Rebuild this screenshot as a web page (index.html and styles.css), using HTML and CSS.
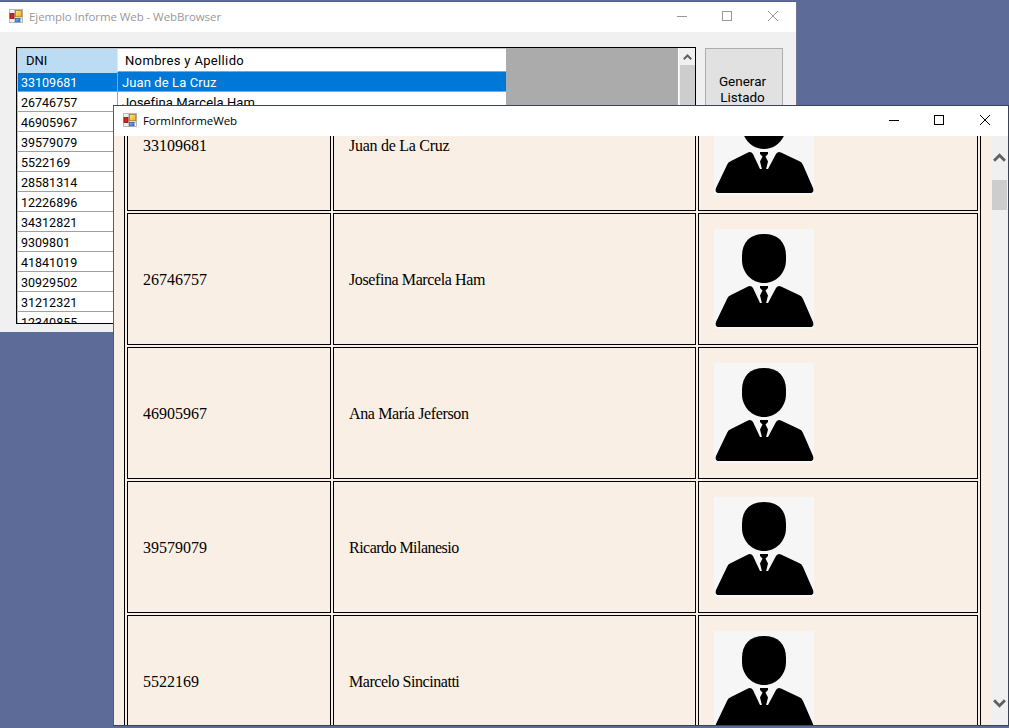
FILE: index.html
```html
<!DOCTYPE html>
<html lang="es">
<head>
<meta charset="utf-8">
<title>Ejemplo Informe Web</title>
<link rel="stylesheet" href="styles.css">
</head>
<body>
<svg width="0" height="0" class="defs">
  <defs>
    <linearGradient id="gy" x2="1" y2="1"><stop stop-color="#ffe68a"/><stop offset="1" stop-color="#e8ab10"/></linearGradient>
    <linearGradient id="gb" x2="1" y2="1"><stop stop-color="#8fc0ff"/><stop offset="1" stop-color="#2a62cc"/></linearGradient>
  </defs>
  <symbol id="app" viewBox="0 0 14 14">
    <rect x=".5" y=".5" width="13" height="13" fill="#f1f1f1" stroke="#b9b9b9"/>
    <path d="M5.5 1v12M1 9.5h12" stroke="#c9c9c9"/>
    <rect x="1" y="4.5" width="4" height="5" fill="#d5281c" stroke="#8d1109" stroke-width=".8"/>
    <rect x="6.4" y="1.4" width="6.4" height="6.4" fill="url(#gy)" stroke="#a9790b" stroke-width=".8"/>
    <rect x="6.4" y="9.4" width="4.6" height="3.4" fill="url(#gb)" stroke="#3563b5" stroke-width=".8"/>
  </symbol>
  <symbol id="min" viewBox="0 0 12 12"><path d="M1 6.5h10" stroke="currentColor"/></symbol>
  <symbol id="max" viewBox="0 0 12 12"><rect x="1.5" y="1.5" width="9" height="9" fill="none" stroke="currentColor"/></symbol>
  <symbol id="close" viewBox="0 0 12 12"><path d="M1 1l10 10M11 1L1 11" stroke="currentColor"/></symbol>
  <symbol id="up" viewBox="0 0 12 10"><path d="M1 8l5-5 5 5" fill="none" stroke="#606060" stroke-width="2.6"/></symbol>
  <symbol id="person" viewBox="0 0 100 100">
    <rect width="100" height="100" fill="#f6f6f6"/>
    <path d="M50 5c14 0 22 8 22 22v4c0 13-10 23-22 23S28 44 28 31v-4C28 13 36 5 50 5z"/>
    <path d="M34 57.500q3-1.500 5 1.500l7 15h8l8-15q2-3 5-1.500l18 8.500q3 1 4 4l10 23q1.500 5-3 5H5q-4.500 0-3-5l11-23q1-3 4-4z"/>
    <path d="M46 57h8v2l-2.500 2.500 2.500 5-2 8h-4l-2-8 2.500-5L46 59z"/>
  </symbol>
</svg>

<main class="desktop">
  <section class="window back">
    <header class="titlebar">
      <svg class="app"><use href="#app"/></svg>
      <span class="title">Ejemplo Informe Web - WebBrowser</span>
      <svg class="ctl"><use href="#min"/></svg><svg class="ctl"><use href="#max"/></svg><svg class="ctl last"><use href="#close"/></svg>
    </header>
    <div class="form">
      <div class="datagrid">
        <div class="rows">
          <div class="row head"><span>DNI</span><span>Nombres y Apellido</span></div>
          <div class="row selected"><span>33109681</span><span>Juan de La Cruz</span></div>
          <div class="row"><span>26746757</span><span>Josefina Marcela Ham</span></div>
          <div class="row"><span>46905967</span><span></span></div>
          <div class="row"><span>39579079</span><span></span></div>
          <div class="row"><span>5522169</span><span></span></div>
          <div class="row"><span>28581314</span><span></span></div>
          <div class="row"><span>12226896</span><span></span></div>
          <div class="row"><span>34312821</span><span></span></div>
          <div class="row"><span>9309801</span><span></span></div>
          <div class="row"><span>41841019</span><span></span></div>
          <div class="row"><span>30929502</span><span></span></div>
          <div class="row"><span>31212321</span><span></span></div>
          <div class="row"><span>12340855</span><span></span></div>
        </div>
        <div class="gridscroll"><svg><use href="#up"/></svg><div class="gridthumb"></div></div>
      </div>
      <button class="generate">Generar<br>Listado</button>
    </div>
  </section>

  <section class="window front">
    <header class="titlebar">
      <svg class="app"><use href="#app"/></svg>
      <span class="title">FormInformeWeb</span>
      <svg class="ctl"><use href="#min"/></svg><svg class="ctl"><use href="#max"/></svg><svg class="ctl last"><use href="#close"/></svg>
    </header>
    <div class="browser">
      <div class="page">
        <div class="report">
          <div class="cell">33109681</div><div class="cell n1">Juan de La Cruz</div><div class="cell photo"><svg><use href="#person"/></svg></div>
          <div class="cell">26746757</div><div class="cell n2">Josefina Marcela Ham</div><div class="cell photo"><svg><use href="#person"/></svg></div>
          <div class="cell">46905967</div><div class="cell n3">Ana María Jeferson</div><div class="cell photo"><svg><use href="#person"/></svg></div>
          <div class="cell">39579079</div><div class="cell n4">Ricardo Milanesio</div><div class="cell photo"><svg><use href="#person"/></svg></div>
          <div class="cell">5522169</div><div class="cell n5">Marcelo Sincinatti</div><div class="cell photo"><svg><use href="#person"/></svg></div>
        </div>
      </div>
      <div class="scrollbar">
        <svg><use href="#up"/></svg>
        <div class="thumb"></div>
        <svg class="down"><use href="#up"/></svg>
      </div>
    </div>
  </section>
</main>
</body>
</html>
```
FILE: styles.css
```css
* { box-sizing: border-box; }
body { margin: 0; font-family: "Liberation Sans", Arial, sans-serif; }
.defs { position: absolute; }
svg { display: block; flex: none; }
.desktop { position: relative; width: 1009px; height: 728px; overflow: hidden; background: #5d6b99; }

.window { position: absolute; display: flex; flex-direction: column; }
.back { left: 0; top: 1px; width: 797px; height: 331px; border-top: 1px solid #53608c; border-right: 1px solid #6c7598; }
.front { left: 113px; top: 105px; width: 896px; height: 621px; border: 1px solid #3c4257; border-left-color: #555b6e; }

.titlebar { display: flex; align-items: center; height: 30px; flex: none; background: #fff; font-family: "Open Sans", "Noto Sans", sans-serif; font-size: 11.5px; color: #000; padding: 0 17px 0 9px; }
.back .titlebar { color: #999; }
.app { width: 14px; height: 14px; margin-right: 6px; margin-top: -2px; }
.title { flex: 1; white-space: nowrap; margin-top: -2px; letter-spacing: -.08px; }
.ctl { width: 12px; height: 12px; margin-left: 33px; margin-top: -2px; }
.last { margin-left: 34px; }

.form { flex: 1; display: flex; padding: 15px 0 8px 16px; background: #f0f0f0; }
.datagrid { width: 680px; height: 277px; border: 1px solid #000; background: #ababab; display: flex; justify-content: space-between; overflow: hidden; }
.rows { width: 490px; border-left: 1px solid #c0c0c0; border-right: 1px solid #ababab; }
.row { display: grid; grid-template-columns: 100px 1fr; height: 20px; background: #fff; border-bottom: 1px solid #a0a0a0; font: 400 12.5px/21px Roboto, "Liberation Sans", sans-serif; white-space: nowrap; color: #000; }
.row span { padding-left: 3px; }
.row span:first-child { border-right: 1px solid #a0a0a0; }
.row span + span { padding-left: 4px; font-size: 13px; letter-spacing: .1px; }
.row.head { height: 24px; line-height: 24px; border-top: 1px solid #c8c8c8; font-size: 13px; }
.head span:first-child { background: #bcdcf4; padding-left: 8px; border-right-color: #e5e5e5; }
.row.head span + span { padding-left: 7px; letter-spacing: .35px; }
.row.selected { background: #0078d7; color: #fff; }
.gridscroll { width: 17px; background: #f0f0f0; border-left: 1px solid #fff; display: flex; flex-direction: column; align-items: center; }
.gridscroll svg { width: 9px; height: 8px; margin: 5px 0 4px; }
.gridthumb { width: 15px; height: 150px; background: #cdcdcd; }
.generate { width: 78px; height: 84px; margin: 1px 0 0 9px; padding: 0 3px 2px 0; border: 1px solid #adadad; background: #e1e1e1; font: 400 13.5px/16px Roboto, "Liberation Sans", sans-serif; color: #000; }

.browser { flex: 1; display: flex; min-height: 0; overflow: hidden; background: #faefe5; }
.page { width: 877px; padding-left: 10px; overflow: hidden; }
.report { width: 857px; margin-top: -60px; padding: 3px 2px; border: solid #000; border-width: 0 1px; display: grid; grid-template-columns: 204px 363px 280px; grid-auto-rows: 132px; gap: 2px; font: 16px "Liberation Serif", "Times New Roman", serif; }
.cell { border: 1px solid #000; padding: 2px 15px 0; display: flex; align-items: center; white-space: nowrap; }
.photo { padding-top: 0; }
.cell svg { width: 100px; height: 100px; }
.n1 { letter-spacing: -.27px; }
.n2 { letter-spacing: -.4px; }
.n3 { letter-spacing: -.37px; }
.n4 { letter-spacing: -.53px; }
.n5 { letter-spacing: -.46px; }
.scrollbar { width: 17px; background: #f0f0f0; display: flex; flex-direction: column; align-items: center; }
.scrollbar svg { width: 13px; height: 11px; margin-top: 16px; }
.thumb { width: 15px; height: 30px; margin-top: 17px; background: #cdcdcd; }
.scrollbar .down { margin-top: auto; margin-bottom: 16px; transform: scaleY(-1); }
```
